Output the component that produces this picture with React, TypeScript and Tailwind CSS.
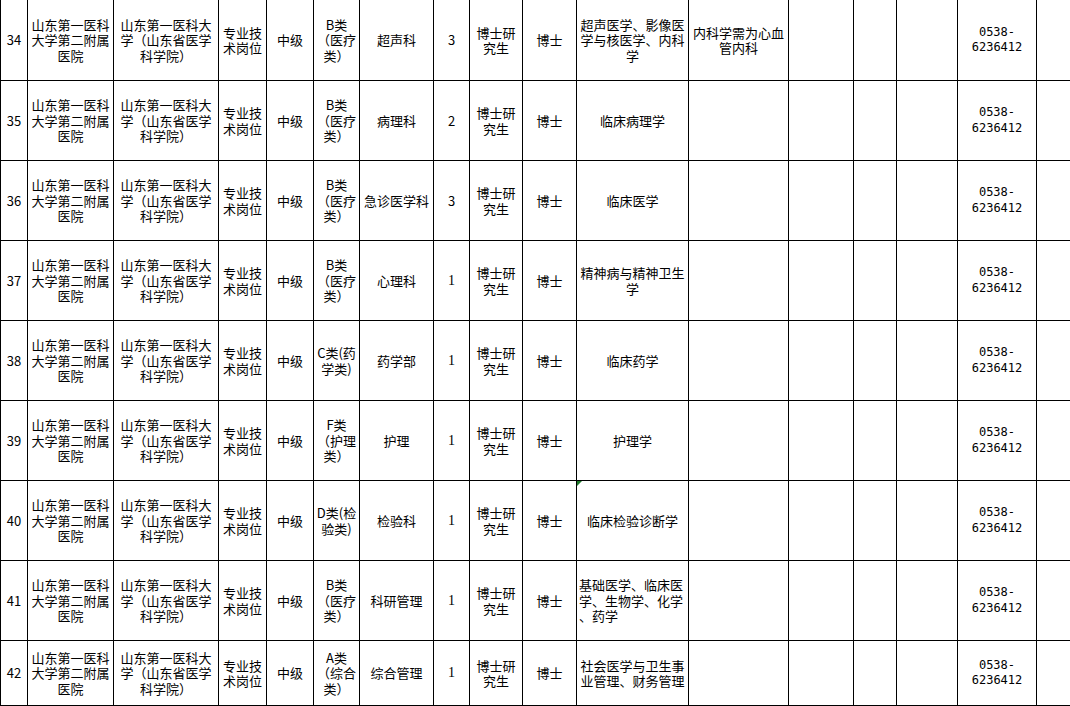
type Row = {
  no: string
  cat: string[]
  dept: string
  count: string
  serifCount?: boolean
  major: string[]
  majorLeft?: boolean
  note?: string[]
  flag?: boolean
}

const rows: Row[] = [
  { no: '34', cat: ['B类', '（医疗', '类）'], dept: '超声科', count: '3', major: ['超声医学、影像医', '学与核医学、内科', '学'], note: ['内科学需为心血', '管内科'] },
  { no: '35', cat: ['B类', '（医疗', '类）'], dept: '病理科', count: '2', major: ['临床病理学'] },
  { no: '36', cat: ['B类', '（医疗', '类）'], dept: '急诊医学科', count: '3', major: ['临床医学'] },
  { no: '37', cat: ['B类', '（医疗', '类）'], dept: '心理科', count: '1', serifCount: true, major: ['精神病与精神卫生', '学'] },
  { no: '38', cat: ['C类(药', '学类)'], dept: '药学部', count: '1', serifCount: true, major: ['临床药学'] },
  { no: '39', cat: ['F类', '（护理', '类）'], dept: '护理', count: '1', serifCount: true, major: ['护理学'] },
  { no: '40', cat: ['D类(检', '验类)'], dept: '检验科', count: '1', serifCount: true, major: ['临床检验诊断学'], flag: true },
  { no: '41', cat: ['B类', '（医疗', '类）'], dept: '科研管理', count: '1', serifCount: true, major: ['基础医学、临床医', '学、生物学、化学', '、药学'], majorLeft: true },
  { no: '42', cat: ['A类', '（综合', '类）'], dept: '综合管理', count: '1', serifCount: true, major: ['社会医学与卫生事', '业管理、财务管理'] },
]

// full-width paren at line start gets trimmed by the browser, keep its full em box
function Line({ text }: { text: string }) {
  if (text.startsWith('（')) {
    return (
      <div className="whitespace-nowrap">
        <span className="inline-block w-[1em] text-right">（</span>
        {text.slice(1)}
      </div>
    )
  }
  return <div className="whitespace-nowrap">{text}</div>
}

function Lines({ lines, left }: { lines: string[]; left?: boolean }) {
  return (
    <div className={left ? 'text-left' : 'text-center'}>
      {lines.map((l, i) => (
        <Line key={i} text={l} />
      ))}
    </div>
  )
}

function Cell({ children, last, className = '' }: { children?: React.ReactNode; last?: boolean; className?: string }) {
  return (
    <div
      className={`relative flex items-center justify-center border-b border-black ${last ? '' : 'border-r'} ${className}`}
    >
      {children}
    </div>
  )
}

export default function App() {
  return (
    <div className="w-[1070px] h-[706px] overflow-hidden bg-white text-black text-[13px] leading-[15.5px] font-['Noto_Sans_CJK_SC',sans-serif]">
      <div className="grid w-max border-l border-black grid-cols-[27px_86px_105px_48px_47px_46px_74px_36px_53px_54px_112px_100px_65px_43px_61px_79px_60px] grid-rows-[81px_repeat(7,80px)_65px]">
        {rows.map((r) => (
          <div key={r.no} className="contents">
            <Cell>
              <span className="text-[13px]">{r.no}</span>
            </Cell>
            <Cell>
              <Lines lines={['山东第一医科', '大学第二附属', '医院']} />
            </Cell>
            <Cell>
              <Lines lines={['山东第一医科大', '学（山东省医学', '科学院）']} />
            </Cell>
            <Cell>
              <Lines lines={['专业技', '术岗位']} />
            </Cell>
            <Cell>中级</Cell>
            <Cell>
              <Lines lines={r.cat} />
            </Cell>
            <Cell>{r.dept}</Cell>
            <Cell>
              <span className={r.serifCount ? "font-['Liberation_Serif',serif] text-[14px]" : ''}>{r.count}</span>
            </Cell>
            <Cell>
              <Lines lines={['博士研', '究生']} />
            </Cell>
            <Cell>博士</Cell>
            <Cell className={r.majorLeft ? 'justify-start pl-[2px]' : ''}>
              {r.flag && (
                <div className="absolute left-0 top-0 w-0 h-0 border-t-[5px] border-r-[5px] border-t-[#1d7a2a] border-r-transparent" />
              )}
              <Lines lines={r.major} left={r.majorLeft} />
            </Cell>
            <Cell>{r.note && <Lines lines={r.note} />}</Cell>
            <Cell />
            <Cell />
            <Cell />
            <Cell>
              <div className="font-['DejaVu_Sans_Mono',monospace] text-[12px] leading-[15.5px] text-center">
                <div>0538-</div>
                <div>6236412</div>
              </div>
            </Cell>
            <Cell last />
          </div>
        ))}
      </div>
    </div>
  )
}
